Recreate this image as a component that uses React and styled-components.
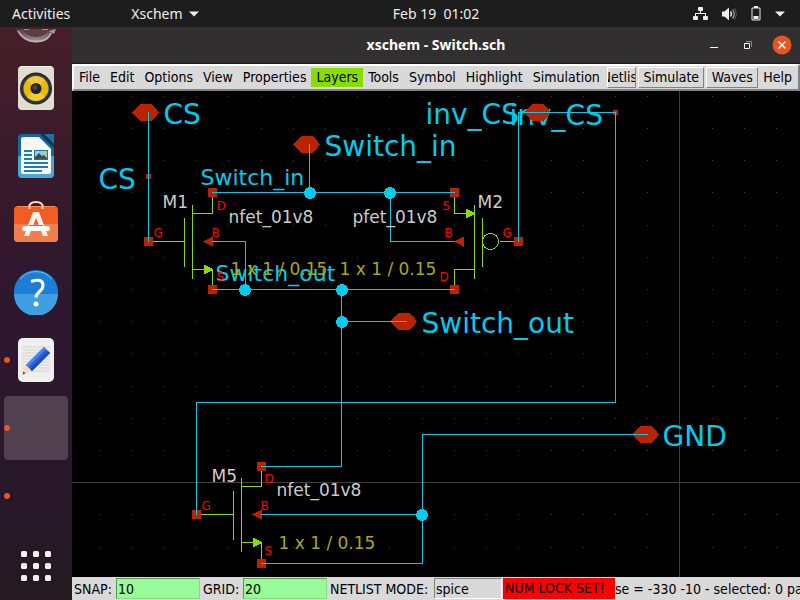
import React from "react";
import styled, { createGlobalStyle } from "styled-components";

const GlobalStyle = createGlobalStyle`
  * { box-sizing: border-box; }
  body { margin: 0; background: #000; }
  button, input { font: inherit; color: inherit; margin: 0; }
`;

const UI_FONT = '"Noto Sans", "Open Sans", sans-serif';
const TK_FONT = '"DejaVu Sans Condensed", "DejaVu Sans", sans-serif';
const CANVAS_FONT = '"DejaVu Sans", sans-serif';

const Desktop = styled.div`
  display: grid;
  grid-template-rows: 27px minmax(0, 1fr);
  height: 100vh;
  overflow: hidden;
  background: #000;
`;

const TopBar = styled.header`
  display: grid;
  grid-template-columns: 72px 1fr auto 1fr;
  align-items: center;
  background: #1d1d1d;
  color: #eee;
  font: 14px/26px ${UI_FONT};
`;

const BarButton = styled.button`
  display: flex;
  align-items: center;
  gap: 6px;
  padding: 0;
  border: 0;
  background: none;
  white-space: pre;
`;

const BarLeft = styled.nav`
  grid-column: 1 / 3;
  display: flex;
  gap: 61px;
  padding-left: 12px;
`;

const StatusIcons = styled(BarButton)`
  justify-self: end;
  gap: 14px;
  padding-right: 15px;
`;

const Workspace = styled.div`
  display: grid;
  grid-template-columns: 72px minmax(0, 1fr);
  min-height: 0;
`;

const Dock = styled.nav`
  display: flex;
  flex-direction: column;
  gap: 4px;
  padding: 0 4px;
  overflow: hidden;
  background: linear-gradient(#461f28 0%, #3e1c29 14%, #30182d 40%, #2e172f 56%, #28172a 78%, #241a20 100%);
`;

const DockItem = styled.button`
  display: flex;
  flex: none;
  align-items: ${(p) => (p.$cut ? "flex-start" : "center")};
  justify-content: center;
  position: relative;
  height: ${(p) => (p.$cut ? "25px" : "64px")};
  padding: ${(p) => (p.$cut ? "2px 0 0" : "0")};
  border: 0;
  border-radius: 4px;
  overflow: hidden;
  background: ${(p) => (p.$active ? "#51404e" : "none")};
  ${(p) => p.$last && "margin-top: auto; margin-bottom: 2px;"}
`;

const RunningDot = styled.span`
  position: absolute;
  left: 0;
  top: 29px;
  width: 6px;
  height: 6px;
  border-radius: 50%;
  background: #e95420;
`;

const AppWindow = styled.main`
  display: grid;
  grid-template-rows: 37px 27px minmax(0, 1fr) 23px;
  min-width: 0;
  min-height: 0;
  font: 14px/18px ${TK_FONT};
  color: #000;
`;

const TitleBar = styled.div`
  display: grid;
  grid-template-columns: 1fr auto 1fr;
  align-items: center;
  background: #312f30;
  border-bottom: 1px solid #1c1b1b;
`;

const Title = styled.h1`
  grid-column: 2;
  margin: 0;
  color: #fff;
  font: bold 14px/20px ${UI_FONT};
`;

const WindowButtons = styled.div`
  display: flex;
  justify-content: flex-end;
  gap: 14px;
  padding-right: 8px;
`;

const WindowButton = styled.button`
  display: flex;
  padding: 0;
  border: 0;
  background: none;
`;

const MenuBar = styled.nav`
  display: flex;
  align-items: center;
  padding-right: 1px;
  background: #d9d9d9;
  border: 2px solid;
  border-color: #fff #828282 #828282 #fff;
  overflow: hidden;
`;

const MenuItem = styled.button`
  flex: none;
  height: 19px;
  padding: 0 5px;
  border: 0;
  background: ${(p) => (p.$highlight ? "#88dd00" : "none")};
  line-height: 19px;
  white-space: nowrap;
`;

const MenuAction = styled.button`
  display: flex;
  flex: none;
  justify-content: center;
  width: ${(p) => p.$width};
  height: 21px;
  margin-left: 2px;
  padding: 0;
  overflow: hidden;
  border: 1px solid;
  border-color: #fff #828282 #828282 #fff;
  background: #d9d9d9;
  line-height: 19px;
  white-space: nowrap;
`;

const Spacer = styled.span`
  flex: 1;
`;

const Canvas = styled.section`
  min-width: 0;
  min-height: 0;
  overflow: hidden;
  background: #000;
`;

const Drawing = styled.svg`
  display: block;
  width: 100%;
  height: 100%;
`;

const StatusBar = styled.footer`
  display: flex;
  align-items: center;
  padding-left: 2px;
  overflow: hidden;
  background: #d9d9d9;
  white-space: nowrap;
`;

const Field = styled.label`
  display: flex;
  flex: none;
  align-items: center;
  justify-content: space-between;
  width: ${(p) => p.$width};
  margin-right: ${(p) => p.$after || "3px"};
`;

const FieldInput = styled.input`
  width: ${(p) => p.$width};
  height: 21px;
  padding: 0 1px;
  border: 1px solid;
  border-color: ${(p) => (p.$green ? "#5b955a #84dc83 #84dc83 #5b955a" : "#828282 #fff #fff #828282")};
  border-radius: 0;
  background: ${(p) => (p.$green ? "#98fb98" : "#d9d9d9")};
`;

const Warning = styled.strong`
  flex: none;
  width: 112px;
  height: 21px;
  padding-left: 2px;
  background: #f00;
  font-weight: normal;
  line-height: 21px;
`;

const StatusText = styled.output`
  flex: 1;
  min-width: 0;
  overflow: hidden;
`;

/* ---------- icons ---------- */

const Caret = () => (
  <svg width="10" height="6" viewBox="0 0 10 6"><path d="M0 .5h10L5 5.500z" fill="#eee" /></svg>
);

const NetworkIcon = () => (
  <svg width="15" height="14" viewBox="0 0 15 14" fill="#eee">
    <rect x="5" y="0" width="5" height="4" rx="1" />
    <path d="M7 4h1v2h5v3h-1V7H3v2H2V6h5z" />
    <rect x="0" y="9" width="5" height="4" rx="1" />
    <rect x="10" y="9" width="5" height="4" rx="1" />
  </svg>
);

const VolumeIcon = () => (
  <svg width="15" height="14" viewBox="0 0 15 14">
    <path d="M0 4.500h2.500L7 .5v13L2.500 9.500H0z" fill="#eee" />
    <path d="M8.500 4.500q2 2.500 0 5" fill="none" stroke="#eee" strokeWidth="1.300" />
    <path d="M10.500 2.500q3.500 4.500 0 9" fill="none" stroke="#aaa" strokeWidth="1.200" />
    <path d="M12.500 1q3.500 6 0 12" fill="none" stroke="#555" />
  </svg>
);

const BatteryIcon = () => (
  <svg width="10" height="15" viewBox="0 0 10 15">
    <path d="M3 0h4v1.500h1.500q1 0 1 1v11q0 1-1 1h-7q-1 0-1-1v-11q0-1 1-1H3z" fill="#eee" />
    <path d="M1.500 2.500h7v11h-7z" fill="#1d1d1d" />
    <path d="M2.500 10h5v3h-5z" fill="#eee" />
  </svg>
);

const MailIcon = () => (
  <svg width="40" height="14" viewBox="0 0 40 14">
    <defs><linearGradient id="disc" x1="0" y1="0" x2="0" y2="1"><stop offset="0" stopColor="#573a41" /><stop offset="1" stopColor="#a8999c" /></linearGradient></defs>
    <path d="M0 0Q6 13.500 20 13.500T38 0z" fill="url(#disc)" />
    <path d="M6 0q5 8 14 8t13-8z" fill="#5b3f46" />
    <path d="M8 0h5v1H8zM26 0h6v1h-6z" fill="#a09094" />
    <path d="M2 2Q8 12.500 20 12.500T35 4" fill="none" stroke="#c3b9bb" strokeWidth="1.500" />
    <path d="M33 2l7-2-2 5z" fill="#a5989a" />
  </svg>
);

const MusicIcon = () => (
  <svg width="38" height="46" viewBox="0 0 38 46">
    <rect x="1" y="1" width="36" height="44" rx="4" fill="#e1ddd1" />
    <path d="M4 1.500h30" stroke="#fbfaf6" />
    <circle cx="19" cy="23.500" r="16" fill="#252a38" />
    <circle cx="19" cy="23.500" r="14" fill="#3b3e49" />
    <circle cx="19" cy="23.500" r="12.500" fill="#eab70f" />
    <path d="M19 23.500L10 32a12.500 12.500 0 0 0 18 0zM19 23.500L10 15a12.500 12.500 0 0 1 18 0z" fill="#f8d64a" opacity=".6" />
    <circle cx="19" cy="23.500" r="5.500" fill="#222326" />
    <circle cx="18" cy="22.500" r="2.500" fill="#424448" />
  </svg>
);

const WriterIcon = () => (
  <svg width="38" height="46" viewBox="0 0 38 46">
    <path d="M5 1h19l13 13v27q0 4-4 4H5q-4 0-4-4V5q0-4 4-4z" fill="#0e6a9f" />
    <path d="M1 23h36v18q0 4-4 4H5q-4 0-4-4z" fill="#4aa6d6" />
    <path d="M27 1h10v10z" fill="#1473aa" />
    <path d="M24 1l13 13" stroke="#093c5a" strokeWidth="2" />
    <path d="M7 4h15l12 12v23q0 2-2 2H6q-2 0-2-2V6q0-2 3-2z" fill="#f7f8f8" />
    <path d="M7 18h8M7 22h8M7 26h8M7 30h24M7 34h24M7 38h18" stroke="#1b80b9" strokeWidth="2" />
    <rect x="17" y="17" width="14" height="10" fill="#1a75aa" />
    <rect x="18" y="18" width="12" height="8" fill="#92cee9" />
    <path d="M18 26v-2l4-4 3 3 2-1 3 3v1z" fill="#444d4e" />
    <path d="M27 18h3v3q-3 0-3-3z" fill="#f5bd22" />
  </svg>
);

const SoftwareIcon = () => (
  <svg width="46" height="46" viewBox="0 4 46 46">
    <path d="M16 16V11q0-6 7-6t7 6v5" fill="none" stroke="#f8dca8" strokeWidth="2" />
    <rect x="1" y="9" width="44" height="36" rx="4" fill="#f15d22" />
    <path d="M1 27h44v14q0 4-4 4H5q-4 0-4-4z" fill="#f17f4e" />
    <path d="M4 9.500h38" stroke="#fa8b57" />
    <path d="M16.500 12V9M29.500 12V9" stroke="#f8dca8" strokeWidth="2" />
    <path d="M20 15h6l9 24h-5l-7-18-7 18h-5z" fill="#fff1e8" />
    <rect x="9" y="29" width="28" height="5" rx="2.500" fill="#fff" />
    <path d="M16 28.500h14" stroke="#f15d22" />
  </svg>
);

const HelpIcon = () => (
  <svg width="46" height="46" viewBox="0 0 46 46">
    <circle cx="23" cy="23" r="22" fill="#1c7fd5" />
    <path d="M1 25a22 22 0 0 0 44 0z" fill="#3d9fe0" />
    <path d="M7 10a21 21 0 0 1 32 0" fill="none" stroke="#76b8ed" />
    <path d="M18 12.500q12-4 12 4c0 6-7 6-7 12" fill="none" stroke="#fff" strokeWidth="3" />
    <circle cx="23" cy="35" r="2.500" fill="#fff" />
  </svg>
);

const EditorIcon = () => (
  <svg width="38" height="46" viewBox="0 0 38 46">
    <rect x="1" y="1" width="36" height="44" rx="5" fill="#efefef" />
    <path d="M5 10h28M5 13h28M5 16h28M5 19h28M5 22h28M5 25h28M5 28h28M5 31h28M5 34h28" stroke="#d3d3d3" />
    <path d="M5.500 37.500l3-9 6 6z" fill="#fbd9b6" />
    <path d="M5.500 37.500l1-3 2 2z" fill="#444" />
    <path d="M27 10l6 6-18 18-6-6z" fill="#2b5fd9" />
    <path d="M27 10l2 2-18 18-2-2z" fill="#5085f0" />
    <path d="M31 14l2 2-18 18-2-2z" fill="#1b49b8" />
  </svg>
);

const AppsIcon = () => (
  <svg width="30" height="30" viewBox="0 0 30 30" fill="#f0f0ee">
    {[0, 12, 24].map((y) => [0, 12, 24].map((x) => <rect key={`${x}-${y}`} x={x} y={y} width="6" height="6" rx="1.500" />))}
  </svg>
);

const MinimizeIcon = () => <svg width="20" height="20" viewBox="0 0 20 20"><path d="M6 12h8v1H6z" fill="#fff" /></svg>;
const RestoreIcon = () => (
  <svg width="20" height="20" viewBox="0 0 20 20" fill="none">
    <path d="M8 6.500h5.500V12" stroke="#8b8a8a" />
    <path d="M6.500 8.500h5v5h-5z" stroke="#fff" />
  </svg>
);
const CloseIcon = () => (
  <svg width="20" height="20" viewBox="0 0 20 20">
    <circle cx="10" cy="10" r="9.500" fill="#e95420" />
    <path d="M6.500 6.500l7 7M13.500 6.500l-7 7" stroke="#fff" strokeWidth="1.500" />
  </svg>
);

/* ---------- schematic ---------- */

const C = { wire: "#00ccee", pin: "#bb2200", sym: "#88dd00", name: "#cccccc", label: "#ff0000", size: "#aaaa00", grid: "#3f3f3f" };

const ORIGIN = { x: 679, y: 482, step: 32.2 };

const NETS = [
  "148,112 148,241",
  "309,144 309,192",
  "212,192 454,192",
  "390,192 390,241 454,241",
  "212,241 245,241 245,289",
  "212,289 454,289",
  "341,289 341,466 261,466",
  "341,321 406,321",
  "518,241 518,112 615,112 615,402 196,402 196,514",
  "261,514 422,514",
  "647,434 422,434 422,563 261,563",
];
const JUNCTIONS = [[309, 192], [389, 192], [244, 289], [341, 289], [341, 321], [421, 514]];
const PINS = [[148, 241], [212, 192], [212, 289], [454, 192], [454, 289], [518, 241], [196, 514], [261, 466], [261, 563]];
const TAPS = [[148, 176], [615, 112]];
const PORTS = [[145, 112], [306, 144], [537, 112], [403, 321], [645, 434]];

const NET_LABELS = [
  [163, 123, 28, "CS"],
  [98, 188, 28, "CS"],
  [200, 184, 22, "Switch_in"],
  [324, 155, 28, "Switch_in"],
  [425, 123, 28, "inv_CS"],
  [509, 124, 28, "inv_CS"],
  [215, 280, 22, "Switch_out"],
  [421, 332, 28, "Switch_out"],
  [662, 445, 28, "GND"],
];
const NAMES = [
  [162, 207, "M1"], [477, 207, "M2"], [211, 481, "M5"],
  [228, 222, "nfet_01v8"], [352, 222, "pfet_01v8"], [276, 495, "nfet_01v8"],
];
const SIZES = [[230, 274], [339, 274], [278, 548]];
const PIN_LABELS = [
  [216, 209, "D"], [153, 236, "G"], [211, 236, "B"], [216, 280, "S"],
  [442, 209, "S"], [444, 236, "B"], [502, 236, "G"], [439, 280, "D"],
  [264, 482, "D"], [201, 509, "G"], [260, 509, "B"], [264, 554, "S"],
];

const range = (a, b) => Array.from({ length: b - a + 1 }, (_, i) => a + i);

const Nfet = ({ x, y }) => (
  <g transform={`translate(${x} ${y})`}>
    <path d="M0 0H36M36 -24V25M44 -37V37M44 -28H64V-48M44 28H64V48" fill="none" stroke={C.sym} />
    <path d="M55.500 23L65 28L55.500 33z" fill={C.sym} />
    <path d="M55 0l9.500-5v10z" fill={C.pin} />
  </g>
);

const Pfet = () => (
  <g>
    <path d="M454 192V213H474M474 204V278M482 217V266M499 241H518M454 289V269H474" fill="none" stroke={C.sym} />
    <circle cx="490" cy="241" r="8" fill="none" stroke={C.sym} />
    <path d="M465.500 208L475 213L465.500 218z" fill={C.sym} />
    <path d="M453.500 241l9.500-5v10z" fill={C.pin} />
  </g>
);

const Schematic = () => (
  <Drawing role="img" aria-label="Switch schematic">
    <g transform="translate(-71.500 -90.500)" shapeRendering="crispEdges" fontFamily={CANVAS_FONT}>
      <path d="M0 482H4000M679 0V4000" stroke={C.grid} />
      {range(-18, 60).map((i) => range(-12, 60).map((j) => i && j ? (
        <rect key={`${i}/${j}`} x={Math.floor(ORIGIN.x + 0.8 + i * ORIGIN.step) - 0.5} y={Math.floor(ORIGIN.y + 0.6 + j * ORIGIN.step) - 0.5} width="1" height="1" fill={C.grid} />
      ) : null))}
      {NET_LABELS.map(([x, y, s, t]) => <text key={`${x}${t}`} x={x} y={y} fontSize={s} fill={C.wire}>{t}</text>)}
      <Nfet x={148} y={241} />
      <Nfet x={197} y={514} />
      <Pfet />
      {PORTS.map(([x, y]) => <path key={x} transform={`translate(${x - 0.5} ${y})`} d="M-13 0L-9 -4L-5 -8.500H6L10 -5L14 0L10 5L6 8.500H-5L-9 4z" fill={C.pin} />)}
      {PINS.map(([x, y]) => <rect key={`${x}-${y}`} x={x - 4.5} y={y - 4.5} width="9" height="9" fill={C.pin} />)}
      {TAPS.map(([x, y]) => <rect key={x} x={x - 2.5} y={y - 2.5} width="5" height="5" fill={C.pin} />)}
      {NETS.map((n) => <polyline key={n} points={n} fill="none" stroke={C.wire} strokeLinecap="square" />)}
      {JUNCTIONS.map(([x, y]) => <circle key={`${x}-${y}`} cx={x + 0.5} cy={y + 0.5} r="6" fill={C.wire} />)}
      {NAMES.map(([x, y, t]) => <text key={x} x={x} y={y} fontSize="17" fill={C.name}>{t}</text>)}
      {SIZES.map(([x, y]) => <text key={x} x={x} y={y} fontSize="17" fill={C.size}>1 x 1 / 0.15</text>)}
      {PIN_LABELS.map(([x, y, t]) => <text key={`${x}-${y}`} x={x} y={y} fontSize="12" fill={C.label}>{t}</text>)}
    </g>
  </Drawing>
);

const MENUS = ["File", "Edit", "Options", "View", "Properties", "Layers", "Tools", "Symbol", "Highlight", "Simulation"];

const DOCK = [
  { name: "Mail", Icon: MailIcon, cut: true },
  { name: "Rhythmbox", Icon: MusicIcon },
  { name: "LibreOffice Writer", Icon: WriterIcon },
  { name: "Software", Icon: SoftwareIcon },
  { name: "Help", Icon: HelpIcon },
  { name: "Text Editor", Icon: EditorIcon, running: true },
  { name: "Xschem", active: true, running: true },
  { name: "Terminal", running: true },
  { name: "Show Applications", Icon: AppsIcon, last: true },
];

export default function App() {
  return (
    <Desktop>
      <GlobalStyle />
      <TopBar>
        <BarLeft>
          <BarButton>Activities</BarButton>
          <BarButton>Xschem<Caret /></BarButton>
        </BarLeft>
        <BarButton>{"Feb 19  01:02"}</BarButton>
        <StatusIcons aria-label="System menu">
          <NetworkIcon />
          <VolumeIcon />
          <BatteryIcon />
          <Caret />
        </StatusIcons>
      </TopBar>
      <Workspace>
        <Dock aria-label="Dock">
          {DOCK.map(({ name, Icon, cut, active, running, last }) => (
            <DockItem key={name} aria-label={name} $cut={cut} $active={active} $last={last}>
              {running && <RunningDot />}
              {Icon && <Icon />}
            </DockItem>
          ))}
        </Dock>
        <AppWindow>
          <TitleBar>
            <Title>xschem - Switch.sch</Title>
            <WindowButtons>
              <WindowButton aria-label="Minimize"><MinimizeIcon /></WindowButton>
              <WindowButton aria-label="Restore"><RestoreIcon /></WindowButton>
              <WindowButton aria-label="Close"><CloseIcon /></WindowButton>
            </WindowButtons>
          </TitleBar>
          <MenuBar aria-label="Menu">
            {MENUS.map((m) => <MenuItem key={m} $highlight={m === "Layers"}>{m}</MenuItem>)}
            <Spacer />
            <MenuAction $width="29px">Netlist</MenuAction>
            <MenuAction $width="66px">Simulate</MenuAction>
            <MenuAction $width="52px">Waves</MenuAction>
            <MenuItem>Help</MenuItem>
          </MenuBar>
          <Canvas><Schematic /></Canvas>
          <StatusBar>
            <Field $width="126px">SNAP:<FieldInput $green $width="84px" defaultValue="10" /></Field>
            <Field $width="124px">GRID:<FieldInput $green $width="84px" defaultValue="20" /></Field>
            <Field $width="172px" $after="1px">NETLIST MODE:<FieldInput $width="68px" defaultValue="spice" /></Field>
            <Warning>NUM LOCK SET!</Warning>
            <StatusText>se = -330 -10 - selected: 0 path:</StatusText>
          </StatusBar>
        </AppWindow>
      </Workspace>
    </Desktop>
  );
}
